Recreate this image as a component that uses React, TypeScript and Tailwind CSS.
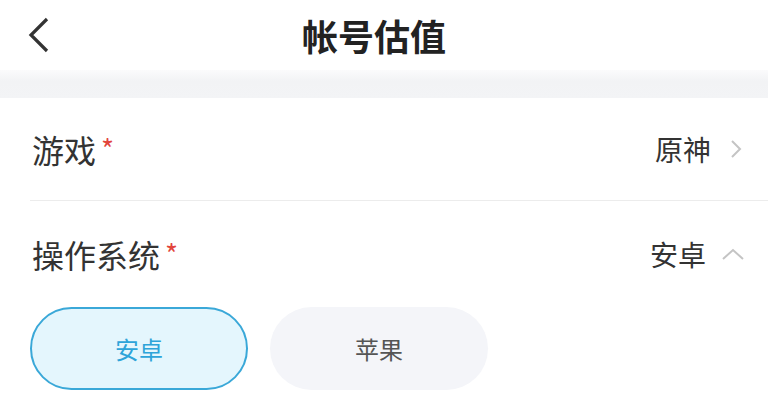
import React from 'react';

const font = { fontFamily: '"Noto Sans CJK SC", "Noto Sans", sans-serif' };

function Row({ label, value, open }: { label: string; value: string; open?: boolean }) {
  return (
    <div className="flex h-full items-center justify-between pl-[32px] pr-[25px]">
      <div className="flex items-start">
        <span className="text-[32px] leading-none text-[#333333]">{label}</span>
        <span className="ml-[5px] mt-[1px] text-[28px] leading-none text-[#e2453c]">*</span>
      </div>
      <div className="flex items-center">
        <span className="text-[28px] leading-none text-[#333333]">{value}</span>
        {open ? (
          <svg width="24" height="14" viewBox="0 0 24 14" className="ml-[15px] mr-[-2px]">
            <path d="M2 12 L12 3 L22 12" fill="none" stroke="#c4c4c4" strokeWidth="2" />
          </svg>
        ) : (
          <svg width="14" height="20" viewBox="0 0 14 20" className="ml-[18px]">
            <path d="M3 2 L11 10 L3 18" fill="none" stroke="#c4c4c4" strokeWidth="2" />
          </svg>
        )}
      </div>
    </div>
  );
}

export default function App() {
  return (
    <div className="h-[415px] w-[768px] overflow-hidden bg-white" style={font}>
      {/* Header */}
      <div className="flex h-[70px] items-center">
        <div className="flex w-[80px] items-center pl-[26px]">
          <svg width="26" height="38" viewBox="0 0 26 38">
            <path d="M21 3 L5 19 L21 35" fill="none" stroke="#333333" strokeWidth="3.2" />
          </svg>
        </div>
        <h1 className="flex-1 text-center text-[36px] font-bold leading-none text-[#222222]">帐号估值</h1>
        <div className="w-[100px]" />
      </div>

      {/* Divider band */}
      <div className="h-[28px] bg-gradient-to-b from-[#fbfbfc] via-[#f2f3f5] via-40% to-[#f3f4f6]" />

      {/* Rows */}
      <div className="h-[102px]">
        <Row label="游戏" value="原神" />
      </div>
      <div className="ml-[30px] h-px bg-[#ececec]" />
      <div className="h-[106px]">
        <Row label="操作系统" value="安卓" open />
      </div>

      {/* Options */}
      <div className="flex gap-[22px] pl-[30px]">
        <button className="flex h-[83px] w-[218px] items-center justify-center rounded-full border-2 border-[#3aa8d8] bg-[#e4f6fd] text-[24px] text-[#2ea4d9]">
          安卓
        </button>
        <button className="flex h-[83px] w-[218px] items-center justify-center rounded-full bg-[#f4f5f9] text-[24px] text-[#555555]">
          苹果
        </button>
      </div>
    </div>
  );
}
